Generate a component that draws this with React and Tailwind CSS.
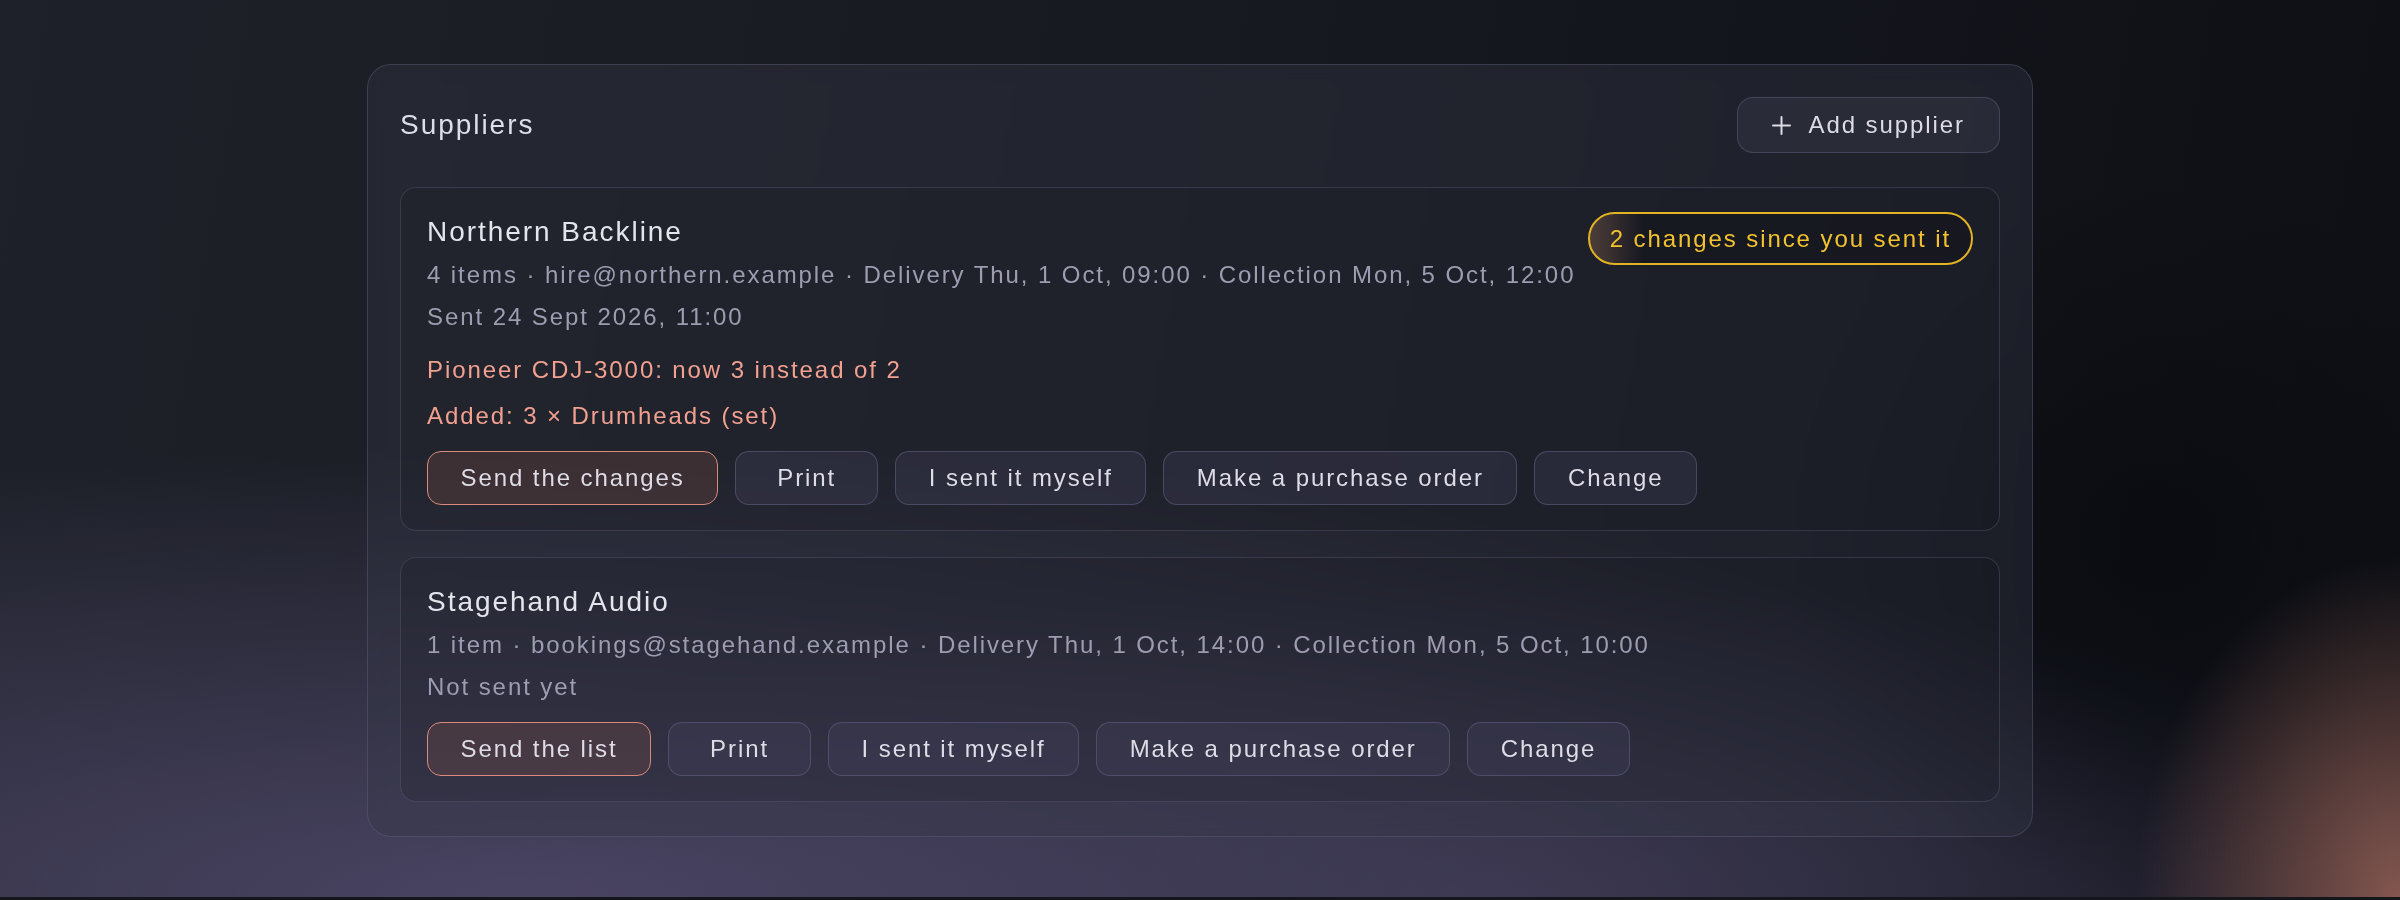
import { Fragment } from 'react';

const suppliers = [
  {
    id: 'northern',
    name: 'Northern Backline',
    meta: '4 items · hire@northern.example · Delivery Thu, 1 Oct, 09:00 · Collection Mon, 5 Oct, 12:00',
    status: 'Sent 24 Sept 2026, 11:00',
    badge: '2 changes since you sent it',
    changes: ['Pioneer CDJ-3000: now 3 instead of 2', 'Added: 3 × Drumheads (set)'],
    primary: 'Send the changes',
  },
  {
    id: 'stagehand',
    name: 'Stagehand Audio',
    meta: '1 item · bookings@stagehand.example · Delivery Thu, 1 Oct, 14:00 · Collection Mon, 5 Oct, 10:00',
    status: 'Not sent yet',
    badge: null,
    changes: [],
    primary: 'Send the list',
  },
];

const secondary = ['Print', 'I sent it myself', 'Make a purchase order', 'Change'];

function PlusIcon() {
  return (
    <svg width="19" height="19" viewBox="0 0 19 19" fill="none" stroke="currentColor" strokeWidth="2" strokeLinecap="round">
      <line x1="9.5" y1="1" x2="9.5" y2="18" />
      <line x1="1" y1="9.5" x2="18" y2="9.5" />
    </svg>
  );
}

function Button({ children, primary }) {
  return (
    <button
      className={
        primary
          ? 'h-[54px] px-[32.5px] rounded-[14px] border-[1.5px] border-[#d98a7b] bg-[rgba(138,84,73,0.25)] text-[24px] leading-9 tracking-[0.08em] text-[#dedce6] whitespace-nowrap'
          : 'h-[54px] min-w-[143px] px-[32.5px] rounded-[14px] border-[1.5px] border-[rgba(100,98,135,0.55)] bg-[rgba(70,70,95,0.3)] text-[24px] leading-9 tracking-[0.08em] text-[#dedce6] whitespace-nowrap'
      }
    >
      {children}
    </button>
  );
}

function SupplierCard({ s }) {
  return (
    <div className="rounded-2xl border border-[rgba(105,103,135,0.35)] bg-[rgba(16,17,24,0.16)] px-[26px] pt-6 pb-[25px] flex flex-col gap-[17px]">
      <div className="flex items-start justify-between gap-2">
        <div className="flex flex-col gap-[6px] whitespace-nowrap">
          <div className="text-[28px] leading-[39px] tracking-[0.07em] text-[#e4e4ec]">{s.name}</div>
          <div className="text-[24px] leading-9 tracking-[0.08em] text-[#9e9cb1]">{s.meta}</div>
          <div className="text-[24px] leading-9 tracking-[0.08em] text-[#9e9cb1]">{s.status}</div>
        </div>
        {s.badge && (
          <span className="h-[53px] shrink-0 flex items-center px-5 rounded-full border-2 border-[#e2b424] bg-[linear-gradient(90deg,rgba(125,92,72,0.5),rgba(18,19,26,0.55)_14%,rgba(18,19,26,0.55))] text-[24px] leading-9 tracking-[0.08em] text-[#f3c22f] whitespace-nowrap">
            {s.badge}
          </span>
        )}
      </div>

      {s.changes.length > 0 && (
        <div className="flex flex-col gap-[10px]">
          {s.changes.map((c) => (
            <div key={c} className="text-[24px] leading-9 tracking-[0.08em] text-[#f2a08f]">{c}</div>
          ))}
        </div>
      )}

      <div className="flex items-center gap-[17px]">
        <Button primary>{s.primary}</Button>
        {secondary.map((label) => (
          <Fragment key={label}>
            <Button>{label}</Button>
          </Fragment>
        ))}
      </div>
    </div>
  );
}

export default function App() {
  return (
    <div className="min-h-screen bg-[#14161b] font-['Liberation_Sans',Arial,sans-serif]">
      <div className="h-[897px] pt-16 bg-[image:radial-gradient(ellipse_11%_38%_at_100%_100%,rgba(160,104,92,0.8),transparent),radial-gradient(ellipse_16%_40%_at_90%_60%,rgba(9,11,17,0.85),transparent),radial-gradient(ellipse_75%_50%_at_22%_100%,rgba(76,70,102,0.95),transparent),radial-gradient(ellipse_45%_35%_at_62%_100%,rgba(62,58,84,0.7),transparent),linear-gradient(100deg,#1e2129,#171920_50%,#0d0f15)]">
        <div className="w-[1666px] mx-auto rounded-3xl border border-[rgba(110,108,140,0.35)] bg-[rgba(52,54,70,0.38)] backdrop-blur-sm pt-8 px-8 pb-[34px]">
          <div className="flex items-center justify-between mb-[34px]">
            <h2 className="text-[28px] tracking-[0.07em] text-[#dedee8]">Suppliers</h2>
            <button className="h-[56px] flex items-center gap-[18px] px-[34px] rounded-2xl border-[1.5px] border-[rgba(95,95,125,0.5)] bg-[rgba(60,62,80,0.35)] text-[24px] leading-9 tracking-[0.08em] text-[#dcdbe6]">
              <PlusIcon />
              Add supplier
            </button>
          </div>

          <div className="flex flex-col gap-[26px]">
            {suppliers.map((s) => (
              <SupplierCard key={s.id} s={s} />
            ))}
          </div>
        </div>
      </div>
    </div>
  );
}
